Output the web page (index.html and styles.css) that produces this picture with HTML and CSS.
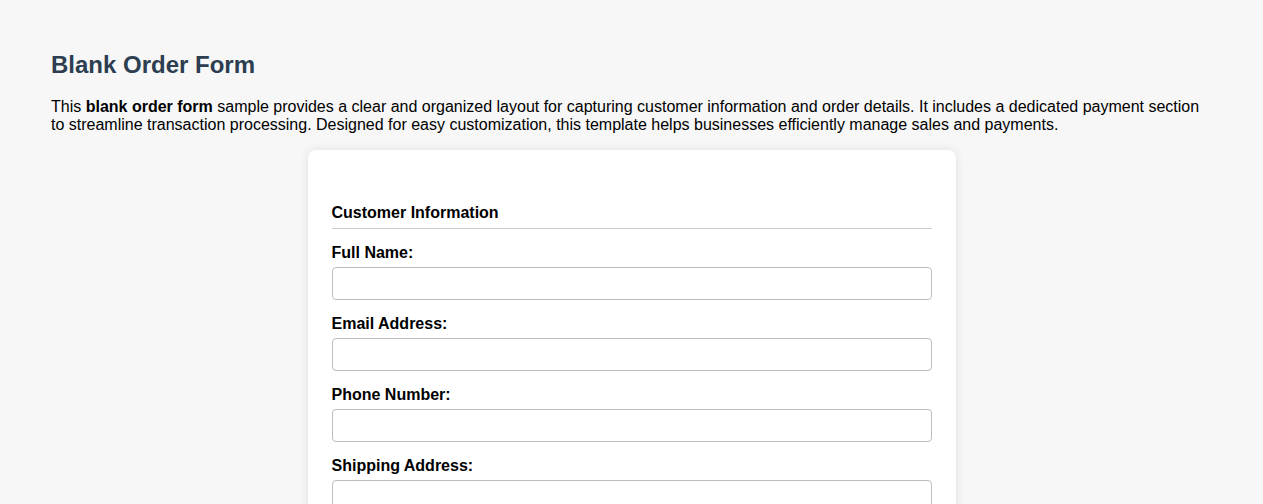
FILE: index.html
```html
<!DOCTYPE html>
<html lang="en">

<head>
  <meta charset="UTF-8" />
  <meta name="viewport" content="width=device-width, initial-scale=1.0" />
  <title>Blank Order Form</title>
  <link rel="stylesheet" href="styles.css">
</head>

<body>
  <main class="page">
    <h1>Blank Order Form</h1>
    <p class="intro">This <strong>blank order form</strong> sample provides a clear and organized layout for capturing customer information and order details. It includes a dedicated payment section to streamline transaction processing. Designed for easy customization, this template helps businesses efficiently manage sales and payments.</p>

    <form class="order-form">
      <h3 class="section-title">Customer Information</h3>
      <div class="field">
        <label for="fullName">Full Name:</label>
        <input type="text" id="fullName" class="input-field" />
      </div>
      <div class="field">
        <label for="email">Email Address:</label>
        <input type="email" id="email" class="input-field" />
      </div>
      <div class="field">
        <label for="phone">Phone Number:</label>
        <input type="tel" id="phone" class="input-field" />
      </div>
      <div class="field">
        <label for="address">Shipping Address:</label>
        <input type="text" id="address" class="input-field" />
      </div>
    </form>
  </main>
</body>

</html>
```

FILE: styles.css
```css
:root {
  --bg: #f7f7f7;
  --heading: #2c3e50;
  --text: #000000;
  --white: #ffffff;
  --line: #cccccc;
  --border: #bdbdbd;
}

body {
  margin: 0;
  background: var(--bg);
  font-family: "Liberation Sans", Arial, sans-serif;
  color: var(--text);
}

.page {
  padding: 51px 51px 40px;
}

h1 {
  margin: 0 0 19px;
  font-size: 24px;
  line-height: 28px;
  color: var(--heading);
}

.intro {
  margin: 0 0 16px;
  font-size: 16px;
  line-height: 18px;
}

.order-form {
  width: 600px;
  margin: 0 auto;
  padding: 54px 24px 24px;
  background: var(--white);
  border-radius: 8px;
  box-shadow: 0 0 10px rgba(0, 0, 0, 0.1);
}

.section-title {
  margin: 0 0 15px;
  padding-bottom: 6px;
  font-size: 16px;
  line-height: 18px;
  border-bottom: 1px solid var(--line);
}

.field {
  display: flex;
  flex-direction: column;
  margin-bottom: 15px;
}

.field label {
  font-weight: bold;
  font-size: 16px;
  line-height: 18px;
  margin-bottom: 5px;
}

.input-field {
  box-sizing: border-box;
  width: 100%;
  height: 33px;
  padding: 6px 8px;
  font-size: 16px;
  font-family: "Liberation Sans", Arial, sans-serif;
  border: 1px solid var(--border);
  border-radius: 4px;
  background: var(--white);
}
```
